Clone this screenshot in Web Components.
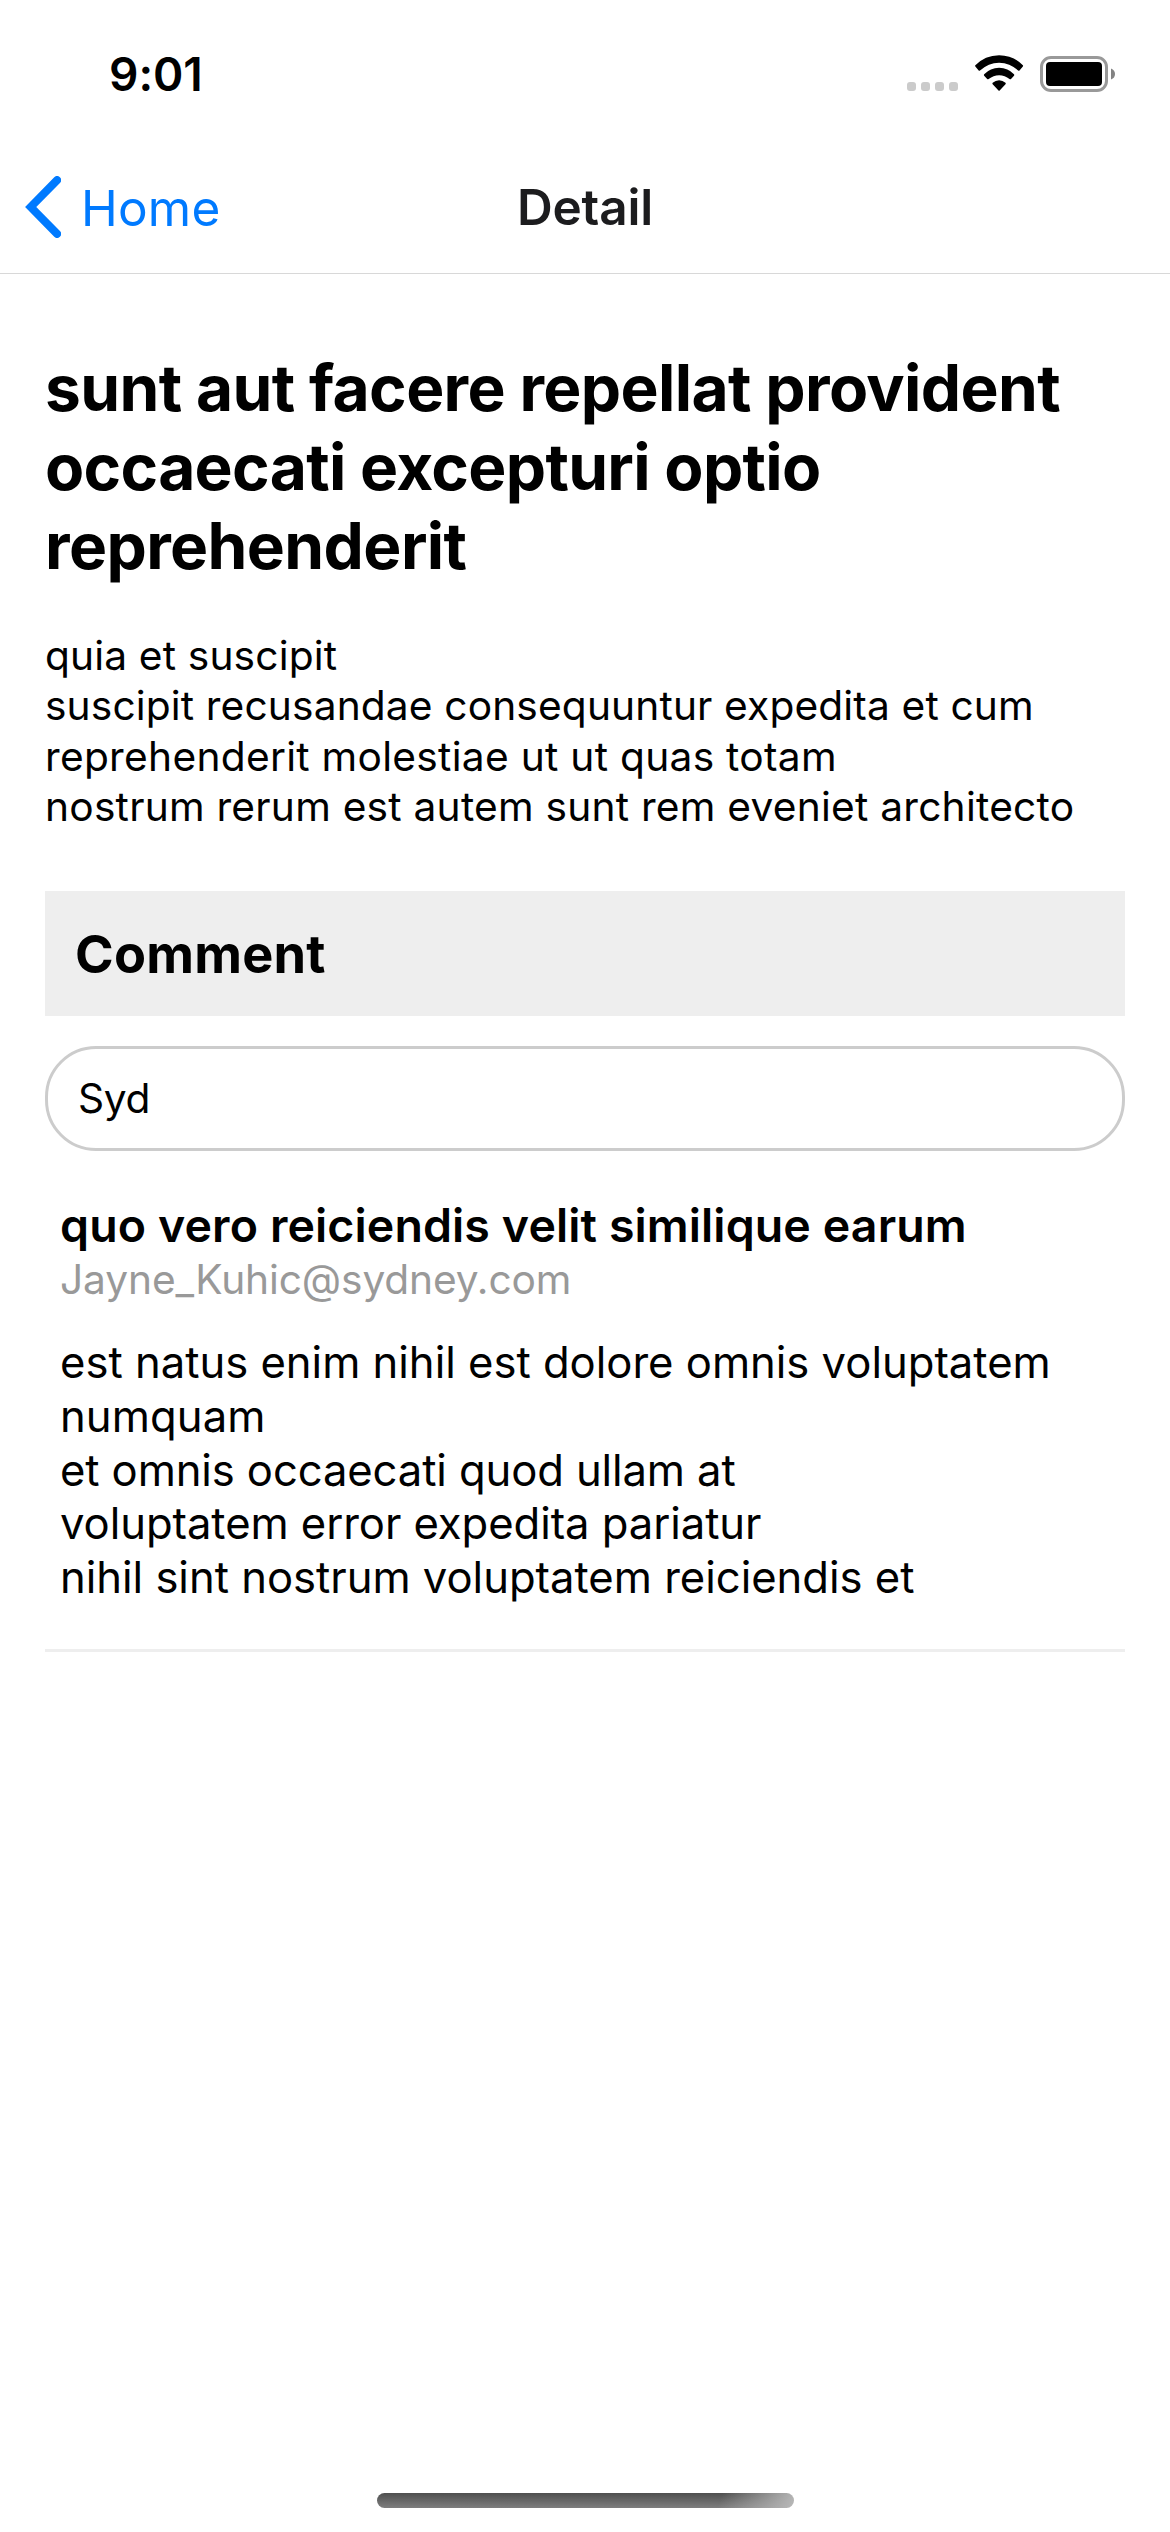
<!DOCTYPE html>
<html lang="en">
<head>
<meta charset="utf-8">
<title>Detail</title>
<style>
  html, body { margin: 0; padding: 0; background: #fff; }
  body { font-family: Inter, "Liberation Sans", sans-serif; color: #000; }
</style>
</head>
<body>
<app-screen>
  <status-bar slot="top" time="9:01"></status-bar>
  <nav-header slot="top" back="Home">Detail</nav-header>
  <post-detail>
    <text-line slot="title" track="-0.635">sunt aut facere repellat provident</text-line>
    <text-line slot="title" track="-0.681">occaecati excepturi optio</text-line>
    <text-line slot="title" track="-0.6">reprehenderit</text-line>
    <text-line track="0.149">quia et suscipit</text-line>
    <text-line track="0.135">suscipit recusandae consequuntur expedita et cum</text-line>
    <text-line track="0.281">reprehenderit molestiae ut ut quas totam</text-line>
    <text-line track="0.226">nostrum rerum est autem sunt rem eveniet architecto</text-line>
  </post-detail>
  <section-heading>Comment</section-heading>
  <search-field>Syd</search-field>
  <comment-item>
    <text-line slot="name" track="0.109">quo vero reiciendis velit similique earum</text-line>
    <text-line slot="email" track="-0.123">Jayne_Kuhic@sydney.com</text-line>
    <text-line track="-0.007">est natus enim nihil est dolore omnis voluptatem</text-line>
    <text-line track="0.1">numquam</text-line>
    <text-line track="-0.11">et omnis occaecati quod ullam at</text-line>
    <text-line track="-0.06">voluptatem error expedita pariatur</text-line>
    <text-line track="-0.015">nihil sint nostrum voluptatem reiciendis et</text-line>
  </comment-item>
  <home-indicator slot="bottom"></home-indicator>
</app-screen>

<script>
const define = (name, html, init) => {
  const template = document.createElement('template');
  template.innerHTML = html;
  customElements.define(name, class extends HTMLElement {
    constructor() {
      super();
      this.attachShadow({ mode: 'open' }).append(template.content.cloneNode(true));
    }
    connectedCallback() { if (init) init(this, this.shadowRoot); }
  });
};

define('app-screen', `
  <style>
    :host { display: flex; flex-direction: column; width: 1170px; height: 2532px; overflow: hidden; background: #fff; }
    main { flex: 1; padding: 74px 45px 0; }
  </style>
  <slot name="top"></slot>
  <main><slot></slot></main>
  <slot name="bottom"></slot>`);

define('status-bar', `
  <style>
    :host { display: flex; justify-content: space-between; align-items: flex-start; box-sizing: border-box;
            height: 141px; padding: 46px 54px 0 109px; }
    .time { font-size: 46px; font-weight: 600; line-height: 56px; letter-spacing: -0.045px; }
    .icons { display: flex; align-items: flex-end; height: 46px; }
    svg { display: block; }
    .signal { margin: 0 15px 1px 0; }
    .wifi { margin: 0 16px 0 0; }
  </style>
  <span class="time"></span>
  <span class="icons">
    <svg class="signal" width="53" height="10" viewBox="0 0 53 10" fill="#cbcbcb">
      <rect x="0" y="1" width="9" height="9" rx="3"/><rect x="14" y="1" width="9" height="9" rx="3"/>
      <rect x="28" y="1" width="9" height="9" rx="3"/><rect x="42" y="1" width="9" height="9" rx="3"/>
    </svg>
    <svg class="wifi" width="49" height="37" viewBox="345 75 147 111">
      <path d="M346 105.500Q375 76 417.300 75.500Q460 76 488.600 105.500Q490 107.500 488.600 109.500L478.500 121.500Q476.500 123.500 474.500 121.500Q450 98.500 417.300 98Q385 98.500 360 121.500Q358 123.500 356 121.500L346 109.500Q344.500 107.500 346 105.500Z"/>
      <path d="M372.500 132.500Q391 113 417.300 113Q444 113 462 132.500Q464 135 462 137.500L453 147Q451 149 448.500 147Q435 135.500 417.300 135.500Q400 135.500 386 147Q383.500 149 381.500 147L372.500 137.500Q370.500 135 372.500 132.500Z"/>
      <path d="M398 158.500Q406.500 151 417.300 151Q428 151 436.500 158.500Q438.500 160.500 436.500 162.500L419 181.500Q417.300 183.500 415.500 181.500L398 162.500Q396 160.500 398 158.500Z"/>
    </svg>
    <svg width="76" height="36" viewBox="0 0 76 36">
      <rect x="1.500" y="1.500" width="65" height="33" rx="9.500" fill="none" stroke="#999" stroke-width="3"/>
      <rect x="6" y="6" width="56" height="24" rx="4"/>
      <path d="M71 12.500Q75 14 75 18Q75 22 71 23.500Z" fill="#838383"/>
    </svg>
  </span>`, (host, root) => { root.querySelector('.time').textContent = host.getAttribute('time'); });

define('nav-header', `
  <style>
    :host { display: grid; grid-template-columns: 1fr auto 1fr; align-items: start; box-sizing: border-box;
            height: 133px; border-bottom: 1px solid #d8d8d8; font-size: 49.5px; line-height: 60px; }
    .back { display: flex; align-items: flex-start; color: #007aff; padding: 35px 0 0 25px; }
    .back span { margin: 2px 0 0 20px; letter-spacing: 0.191px; }
    .title { padding-top: 36px; font-weight: 600; letter-spacing: -0.143px; color: #1c1c1e; }
    svg { display: block; }
  </style>
  <div class="back">
    <svg width="36" height="62" viewBox="0 0 36 62"><path d="M32.100 4.100L5.700 31L32.100 57.900" fill="none" stroke="currentColor" stroke-width="8" stroke-linecap="round" stroke-linejoin="miter"/></svg>
    <span></span>
  </div>
  <div class="title"><slot></slot></div>`,
  (host, root) => { root.querySelector('span').textContent = host.getAttribute('back'); });

define('text-line', `
  <style>:host { display: block; white-space: nowrap; }</style><slot></slot>`,
  host => { host.style.letterSpacing = host.getAttribute('track') + 'px'; });

define('post-detail', `
  <style>
    :host { display: block; }
    .title { font-size: 64px; font-weight: 700; line-height: 79px; }
    .body { margin-top: 46px; height: 200px; font-size: 40.7px; line-height: 50.35px; }
  </style>
  <div class="title"><slot name="title"></slot></div>
  <div class="body"><slot></slot></div>`);

define('section-heading', `
  <style>
    :host { display: block; margin-top: 60px; padding: 31px 30px 30px; background: #eee;
            font-size: 52.3px; font-weight: 700; line-height: 64px; letter-spacing: 0.23px; }
  </style><slot></slot>`);

define('search-field', `
  <style>
    :host { display: block; box-sizing: border-box; height: 105px; margin-top: 30px; padding: 25px 30px 0;
            border: 3px solid #ccc; border-radius: 51px; font-size: 40.7px; line-height: 49px; letter-spacing: -0.289px; }
  </style><slot></slot>`);

define('comment-item', `
  <style>
    :host { display: flex; flex-direction: column; box-sizing: border-box; height: 501px; padding: 46px 15px 0;
            border-bottom: 3px solid #eee; }
    .name { font-size: 46.5px; font-weight: 600; line-height: 56px; }
    .email { margin-top: 2px; font-size: 40.7px; line-height: 49px; color: #999; }
    .text { margin-top: 32.2px; font-size: 43.6px; line-height: 53.75px; }
  </style>
  <div class="name"><slot name="name"></slot></div>
  <div class="email"><slot name="email"></slot></div>
  <div class="text"><slot></slot></div>`);

define('home-indicator', `
  <style>
    :host { display: flex; justify-content: center; padding: 0 0 24px 1px; }
    div { width: 417px; height: 15px; border-radius: 7.5px;
          background: linear-gradient(105deg, rgba(190,190,190,0) 82%, rgba(184,184,184,1) 100%),
                      linear-gradient(#4f4f4f, #7e7e7e); }
  </style><div></div>`);
</script>
</body>
</html>
